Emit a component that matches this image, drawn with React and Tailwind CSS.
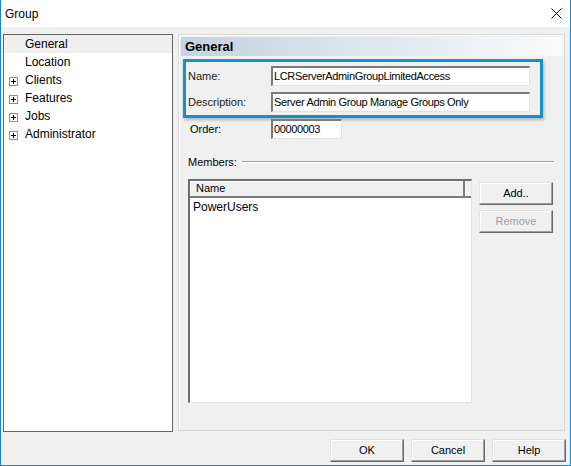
import React from 'react';

const FONT = { fontFamily: '"Liberation Sans", Arial, sans-serif' };

function PlusBox() {
  return (
    <span className="relative mt-[3px] box-border inline-block h-[9px] w-[9px] border border-[#919191] bg-white">
      <span className="absolute left-[1px] top-[3px] h-[1px] w-[5px] bg-black" />
      <span className="absolute left-[3px] top-[1px] h-[5px] w-[1px] bg-black" />
    </span>
  );
}

function TreeRow({ label, expandable, selected }) {
  return (
    <div className={'flex h-[18px] items-center ' + (selected ? 'bg-[#efefef]' : '')}>
      <div className="flex w-[21px] pl-[5px]">{expandable ? <PlusBox /> : null}</div>
      <span className="text-[12px] text-black">{label}</span>
    </div>
  );
}

function Field({ value, width }) {
  return (
    <div
      className="box-border flex h-[20px] items-center border-b border-l-2 border-r border-t-2 border-b-[#e3e3e3] border-l-[#7a7a7a] border-r-[#e3e3e3] border-t-[#7a7a7a] bg-white pl-[1px] text-[11px] tracking-[-0.35px] text-black"
      style={{ width }}
    >
      {value}
    </div>
  );
}

function Btn({ children, disabled, className = '' }) {
  return (
    <button
      type="button"
      className={
        'box-border h-[23px] w-[74px] border border-b-[#696969] border-l-[#e3e3e3] border-r-[#696969] border-t-[#e3e3e3] bg-[#f0f0f0] text-[11px] shadow-[inset_-1px_-1px_0_#a0a0a0,inset_1px_1px_0_#ffffff] ' +
        (disabled ? 'text-[#a0a0a0] ' : 'text-black ') +
        className
      }
    >
      {children}
    </button>
  );
}

export default function App() {
  const tree = [
    { label: 'General', selected: true },
    { label: 'Location' },
    { label: 'Clients', expandable: true },
    { label: 'Features', expandable: true },
    { label: 'Jobs', expandable: true },
    { label: 'Administrator', expandable: true },
  ];

  return (
    <div style={FONT} className="box-border flex h-[466px] w-[571px] flex-col border-x border-b border-[#1883d7] bg-[#f0f0f0]">
      {/* title bar */}
      <div className="flex h-[27px] shrink-0 items-center justify-between bg-white pl-[4px] pr-[8px]">
        <span className="text-[12px] text-black">Group</span>
        <svg width="11" height="11" viewBox="0 0 11 11">
          <path d="M0.5 0.5 L10.5 10.5 M10.5 0.5 L0.5 10.5" stroke="#000" strokeWidth="1" />
        </svg>
      </div>

      <div className="flex gap-[5px] pl-[2px] pt-[7px]">
        {/* tree */}
        <div className="box-border h-[398px] w-[170px] border border-[#646464] bg-white">
          {tree.map((t) => (
            <TreeRow key={t.label} {...t} />
          ))}
        </div>

        {/* page panel */}
        <div className="box-border flex h-[397px] w-[387px] flex-col border border-[#d9d9d9] shadow-[inset_1px_1px_0_#ffffff]">
          <div className="mx-[2px] mt-[2px] flex h-[19px] items-center bg-gradient-to-r from-[#c6d2e0] via-[#dfe6ee] to-[#fbfcfd] pl-[4px] text-[13px] font-bold text-black">
            General
          </div>

          <div className="ml-[4px] mt-[3px] box-border flex h-[59px] w-[360px] flex-col gap-[6px] border-[3px] border-[#1490cc] pl-[2px] pt-[4px] shadow-[1px_2px_3px_rgba(0,0,0,0.25)]">
            <div className="flex items-center">
              <span className="w-[83px] text-[11px] text-[#1a1a1a]">Name:</span>
              <Field value="LCRServerAdminGroupLimitedAccess" width={259} />
            </div>
            <div className="flex items-center">
              <span className="w-[83px] text-[11px] text-[#1a1a1a]">Description:</span>
              <Field value="Server Admin Group Manage Groups Only" width={259} />
            </div>
          </div>

          <div className="mt-[1px] flex items-center pl-[11px]">
            <span className="w-[81px] text-[11px] text-black">Order:</span>
            <Field value="00000003" width={71} />
          </div>

          <div className="mt-[16px] flex h-[14px] items-center gap-[5px] pl-[9px] pr-[10px]">
            <span className="text-[11px] text-black">Members:</span>
            <div className="h-[2px] flex-1 border-b border-t border-b-white border-t-[#a0a0a0]" />
          </div>

          <div className="mt-[10px] flex gap-[7px] pl-[9px]">
            <div className="box-border flex h-[224px] w-[284px] flex-col border-b border-l-2 border-r border-t-2 border-b-[#e3e3e3] border-l-[#6d6d6d] border-r-[#e3e3e3] border-t-[#6d6d6d] bg-white">
              <div className="flex h-[17px] shrink-0">
                <div className="box-border flex w-[275px] items-center border-b-2 border-r-2 border-b-[#7a7a7a] border-r-[#7a7a7a] bg-[#f0f0f0] pl-[6px] text-[11px] text-black shadow-[inset_1px_1px_0_#ffffff]">
                  Name
                </div>
                <div className="box-border flex-1 border-b-2 border-b-[#7a7a7a] bg-[#f0f0f0]" />
              </div>
              <div className="pl-[3px] text-[12px] text-black">PowerUsers</div>
            </div>

            <div className="flex flex-col gap-[5px] pt-[3px]">
              <Btn>Add..</Btn>
              <Btn disabled>Remove</Btn>
            </div>
          </div>
        </div>
      </div>

      <div className="mt-[7px] flex justify-end gap-[7px] pr-[4px]">
        <Btn>OK</Btn>
        <Btn>Cancel</Btn>
        <Btn>Help</Btn>
      </div>
    </div>
  );
}
